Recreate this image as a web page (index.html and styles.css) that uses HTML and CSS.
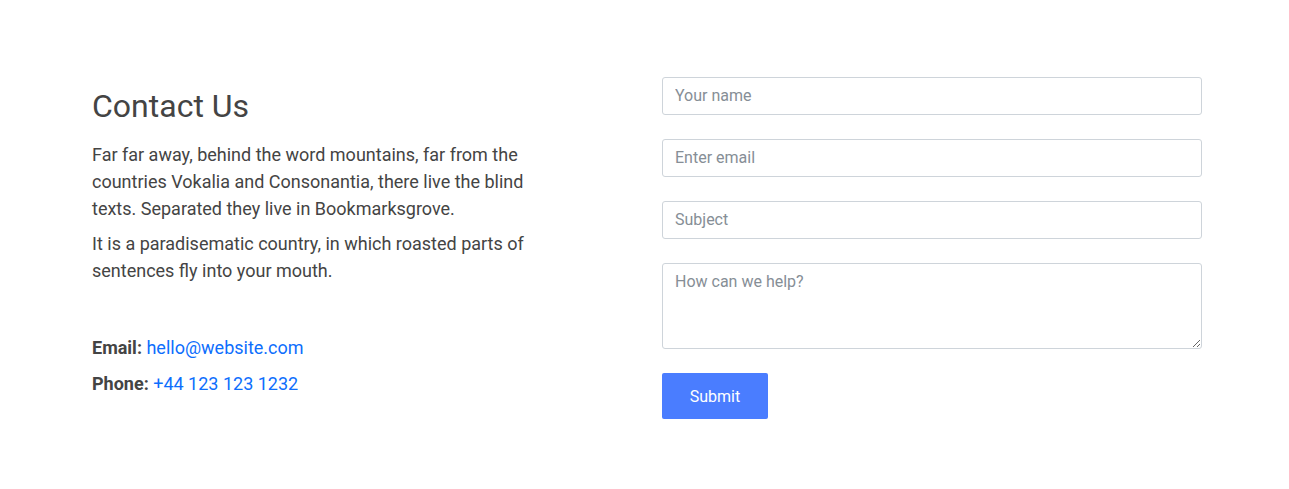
FILE: index.html
```html
<!DOCTYPE html>
<html lang="en">
<head>
<meta charset="utf-8">
<title>Contact Us</title>
<link rel="stylesheet" href="styles.css">
</head>
<body>
<section class="contact">
  <div class="info">
    <h2 class="title">Contact Us</h2>
    <p class="text">Far far away, behind the word mountains, far from the countries Vokalia and Consonantia, there live the blind texts. Separated they live in Bookmarksgrove.</p>
    <p class="text">It is a paradisematic country, in which roasted parts of sentences fly into your mouth.</p>
    <ul class="details">
      <li><strong>Email:</strong> <a href="#">hello@website.com</a></li>
      <li><strong>Phone:</strong> <a href="#">+44 123 123 1232</a></li>
    </ul>
  </div>
  <form class="form">
    <input class="field" type="text" placeholder="Your name">
    <input class="field" type="email" placeholder="Enter email">
    <input class="field" type="text" placeholder="Subject">
    <textarea class="field area" placeholder="How can we help?"></textarea>
    <button class="submit" type="button">Submit</button>
  </form>
</section>
</body>
</html>
```

FILE: styles.css
```css
* { box-sizing: border-box; }
html, body { margin: 0; padding: 0; background: #fff; }
body {
  font-family: Roboto, "Liberation Sans", sans-serif;
  color: #444;
}
.contact {
  display: grid;
  grid-template-columns: 540px 540px;
  column-gap: 30px;
  padding: 77px 0 0 92px;
}
.title {
  margin: 10px 0 16px;
  font-size: 32px;
  font-weight: 400;
  line-height: 38px;
  color: #444;
}
.text {
  margin: 0 0 8px;
  max-width: 450px;
  font-size: 18px;
  line-height: 27px;
}
.details {
  list-style: none;
  margin: 50px 0 0;
  padding: 0;
  font-size: 18px;
  line-height: 27px;
}
.details li { margin-bottom: 9px; }
.details strong { font-weight: 700; color: #444; }
.details a { color: #0d6efd; text-decoration: none; }
.form {
  display: flex;
  flex-direction: column;
  align-items: flex-start;
  gap: 24px;
}
.field {
  width: 540px;
  height: 38px;
  border: 1px solid #ced4da;
  border-radius: 3px;
  padding: 5px 12px 7px;
  font-family: Roboto, "Liberation Sans", sans-serif;
  font-size: 16px;
  color: #495057;
  background: #fff;
  outline: none;
}
.field::placeholder { color: #868e96; }
.area {
  height: 86px;
  resize: vertical;
  padding-top: 6px;
  line-height: 24px;
}
.submit {
  width: 106px;
  height: 46px;
  border: none;
  border-radius: 2px;
  background: #4a7dff;
  color: #fff;
  font-family: Roboto, "Liberation Sans", sans-serif;
  font-size: 16px;
  cursor: pointer;
}
```
